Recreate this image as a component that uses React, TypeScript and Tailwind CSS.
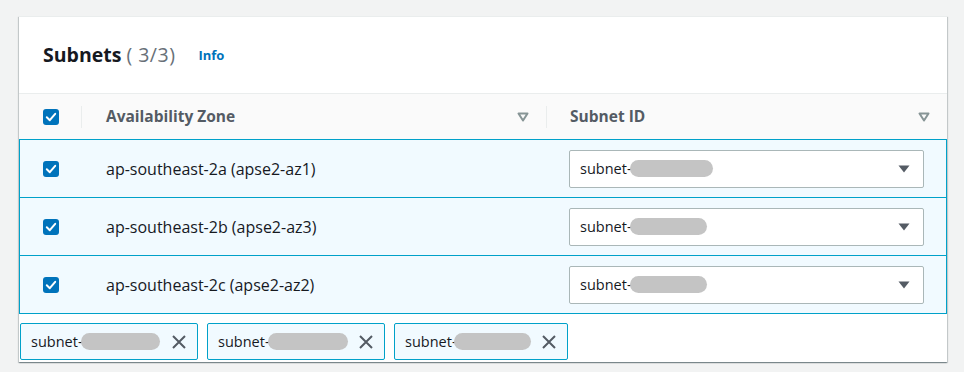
import React from 'react';

const Checkbox: React.FC = () => (
  <div className="w-4 h-4 rounded-[3px] bg-[#0073bb] flex items-center justify-center">
    <svg width="16" height="16" viewBox="0 0 16 16">
      <path d="M3.8 8.3 L6.8 11.2 L12.2 4.8" fill="none" stroke="#fff" strokeWidth="2" strokeLinecap="round" strokeLinejoin="round" />
    </svg>
  </div>
);

const SortIcon: React.FC = () => (
  <svg width="12" height="10" viewBox="0 0 12 10">
    <path d="M1.5 1.5 H10.5 L6 8.5 Z" fill="none" stroke="#879596" strokeWidth="2" strokeLinejoin="round" />
  </svg>
);

const Blob: React.FC<{ w: string }> = ({ w }) => (
  <span className={`inline-block h-[17px] rounded-full bg-[#c4c4c4] ${w}`}></span>
);

const rows = [
  { zone: 'ap-southeast-2a (apse2-az1)', blob: 'w-[83px]' },
  { zone: 'ap-southeast-2b (apse2-az3)', blob: 'w-[77px]' },
  { zone: 'ap-southeast-2c (apse2-az2)', blob: 'w-[77px]' },
];

const tokens = [
  { width: 'w-[178px]', blob: 'w-[79px]', gap: '-ml-[2px]' },
  { width: 'w-[178px]', blob: 'w-[80px]', gap: '-ml-[2px]' },
  { width: 'w-[174px]', blob: 'w-[77px]', gap: '-ml-[3px]' },
];

const App: React.FC = () => {
  return (
    <div className="min-h-screen bg-[#f2f3f3] pl-[19px] pr-[17px] pt-[16px] font-['Open_Sans',sans-serif] text-[14.5px] text-[#16191f]">
      <div className="bg-white border-t border-[#eaeded] shadow-[0_1px_1px_0_rgba(0,28,36,0.3),1px_1px_1px_0_rgba(0,28,36,0.15),-1px_1px_1px_0_rgba(0,28,36,0.15)]">
        {/* Header */}
        <div className="h-[77px] flex items-center pl-6 border-b border-[#eaeded]">
          <h2 className="text-[19.5px] leading-6">
            <span className="font-bold">Subnets</span>
            <span className="ml-[5px] text-[#687078] tracking-[0.5px]">( 3/3)</span>
          </h2>
          <a className="ml-[23px] mt-[2px] text-[13px] font-bold text-[#0073bb]">Info</a>
        </div>

        {/* Column headers */}
        <div className="h-[45px] bg-[#fafafa] flex items-center font-bold text-[15.5px] text-[#545b64]">
          <div className="w-[62px] pl-6">
            <Checkbox />
          </div>
          <div className="w-px h-[22px] bg-[#eaeded]"></div>
          <div className="w-[464px] pl-6 pr-[17px] flex items-center justify-between">
            <span>Availability Zone</span>
            <SortIcon />
          </div>
          <div className="w-px h-[22px] bg-[#eaeded]"></div>
          <div className="flex-1 pl-[23px] pr-[17px] flex items-center justify-between">
            <span>Subnet ID</span>
            <SortIcon />
          </div>
        </div>

        {/* Rows */}
        <div className="border-t border-[#00a1c9]">
          {rows.map((r) => (
            <div key={r.zone} className="h-[58px] flex items-center bg-[#f1faff] border-x border-b border-[#00a1c9]">
              <div className="w-[62px] pl-[23px]">
                <Checkbox />
              </div>
              <div className="w-[464px] pl-6 text-[16px]">{r.zone}</div>
              <div className="flex-1 pl-[23px] pr-[22px]">
                <div className="h-[38px] bg-white border border-[#aab7b8] rounded-[2px] flex items-center pl-[10px] pr-[13px]">
                  <span>subnet-</span>
                  <span className="-ml-[2px] flex items-center">
                    <Blob w={r.blob} />
                  </span>
                  <div className="flex-1"></div>
                  <svg width="12" height="8" viewBox="0 0 12 8">
                    <path d="M0.5 0.5 H11.5 L6 7.5 Z" fill="#545b64" />
                  </svg>
                </div>
              </div>
            </div>
          ))}
        </div>

        {/* Tokens */}
        <div className="flex gap-[9px] pl-px pt-[9px] pb-[2px]">
          {tokens.map((t, i) => (
            <div key={i} className={`${t.width} h-[37px] flex items-center pl-[10px] pr-[10px] bg-[#f1faff] border border-[#00a1c9] rounded-[2px]`}>
              <span>subnet-</span>
              <span className={`${t.gap} flex items-center`}>
                <Blob w={t.blob} />
              </span>
              <div className="flex-1"></div>
              <svg width="16" height="16" viewBox="0 0 16 16">
                <path d="M2 2 L14 14 M14 2 L2 14" fill="none" stroke="#545b64" strokeWidth="2" />
              </svg>
            </div>
          ))}
        </div>
      </div>
    </div>
  );
};

export default App;
